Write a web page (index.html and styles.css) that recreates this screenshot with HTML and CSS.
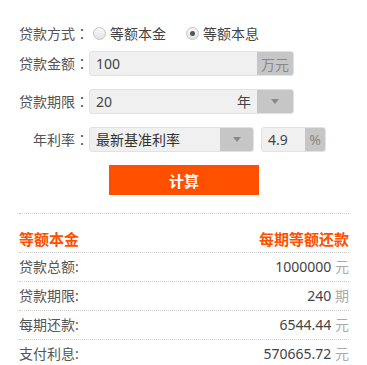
FILE: index.html
```html
<!DOCTYPE html>
<html lang="zh-CN">
<head>
<meta charset="utf-8">
<title>房贷计算器</title>
<link rel="stylesheet" href="styles.css">
</head>
<body>
<div class="calc">
  <div class="form">
    <div class="row">
      <span class="label">贷款方式<span class="colon" lang="zh-TW">：</span></span>
      <span class="radio"></span><span class="opt">等额本金</span>
      <span class="radio checked"></span><span class="opt">等额本息</span>
    </div>
    <div class="row row-amount">
      <span class="label">贷款金额<span class="colon" lang="zh-TW">：</span></span>
      <div class="box box-wide">
        <span class="val">100</span>
        <span class="unit unit-w">万元</span>
      </div>
    </div>
    <div class="row row-gap">
      <span class="label">贷款期限<span class="colon" lang="zh-TW">：</span></span>
      <div class="box box-wide">
        <span class="val">20</span>
        <span class="suffix">年</span>
        <span class="unit unit-w"><i class="arrow"></i></span>
      </div>
    </div>
    <div class="row row-gap">
      <span class="label">年利率<span class="colon" lang="zh-TW">：</span></span>
      <div class="box box-rate">
        <span class="val val-dark">最新基准利率</span>
        <span class="unit unit-s"><i class="arrow"></i></span>
      </div>
      <div class="box box-num">
        <span class="val">4.9</span>
        <span class="unit unit-p">%</span>
      </div>
    </div>
    <div class="btn-row">
      <button class="btn">计算</button>
    </div>
  </div>
  <div class="result">
    <div class="rhead">
      <span>等额本金</span>
      <span>每期等额还款</span>
    </div>
    <div class="rrow"><span class="rl">贷款总额:</span><span class="rv">1000000 <em>元</em></span></div>
    <div class="rrow"><span class="rl">贷款期限:</span><span class="rv">240 <em>期</em></span></div>
    <div class="rrow"><span class="rl">每期还款:</span><span class="rv">6544.44 <em>元</em></span></div>
    <div class="rrow"><span class="rl">支付利息:</span><span class="rv">570665.72 <em>元</em></span></div>
  </div>
</div>
</body>
</html>
```

FILE: styles.css
```css
* { box-sizing: border-box; }
html, body { margin: 0; padding: 0; background: #fff; }
body {
  font-family: "Noto Sans", "Noto Sans CJK SC", sans-serif;
  font-size: 14px;
  color: #333;
}
.calc { width: 330px; margin-left: 19px; }
.form { padding-top: 21px; padding-bottom: 18px; border-bottom: 1px dotted #ccc; }
.row { display: flex; align-items: center; height: 25px; }
.row-amount { margin-top: 5px; }
.row-gap { margin-top: 13px; }
.label { width: 70px; text-align: right; color: #555; line-height: 25px; white-space: nowrap; }
.colon { font-family: "Noto Sans CJK TC", "Noto Sans CJK SC", sans-serif; }
.radio {
  width: 13px; height: 13px; border-radius: 50%;
  border: 1px solid #c4c4c4;
  background: linear-gradient(#fafafa, #e2e2e2);
  margin-left: 4px; margin-right: 4px;
  display: flex; align-items: center; justify-content: center;
}
.radio.checked { margin-left: 20px; }
.radio.checked::after {
  content: ""; width: 5px; height: 5px; border-radius: 50%; background: #555;
}
.opt { color: #444; line-height: 25px; }
.box {
  display: flex; height: 25px;
  border: 1px solid #e2e2e2; border-radius: 3px; overflow: hidden;
  background: #f0f0f0;
}
.box-wide { width: 205px; }
.box-rate { width: 165px; }
.box-num { width: 65px; margin-left: 7px; }
.val { flex: 1; padding-left: 6px; line-height: 23px; color: #444; white-space: nowrap; }
.val-dark { color: #333; }
.suffix { line-height: 23px; padding-right: 6px; color: #444; }
.unit {
  background: #c6c6c6; color: #888;
  display: flex; align-items: center; justify-content: center;
}
.unit-w { width: 36px; }
.unit-s { width: 33px; }
.unit-p { width: 20px; }
.arrow {
  width: 0; height: 0;
  border-left: 4px solid transparent; border-right: 4px solid transparent;
  border-top: 5px solid #888;
}
.btn-row { margin-top: 13px; padding-left: 90px; }
.btn {
  display: block; width: 150px; height: 30px; border: 0; padding: 0;
  background: #ff5000; color: #fff;
  font-family: "Noto Sans", "Noto Sans CJK SC", sans-serif;
  font-size: 15px; font-weight: bold;
}
.rhead {
  display: flex; justify-content: space-between;
  padding-top: 12px; line-height: 26px;
  border-bottom: 1px dotted #ccc;
  color: #ff5000; font-weight: bold; font-size: 15px;
}
.rrow {
  display: flex; justify-content: space-between;
  line-height: 28px; border-bottom: 1px dotted #ccc;
}
.rl { color: #555; }
.rv { color: #444; }
.rv em { font-style: normal; color: #aaa; }
```
